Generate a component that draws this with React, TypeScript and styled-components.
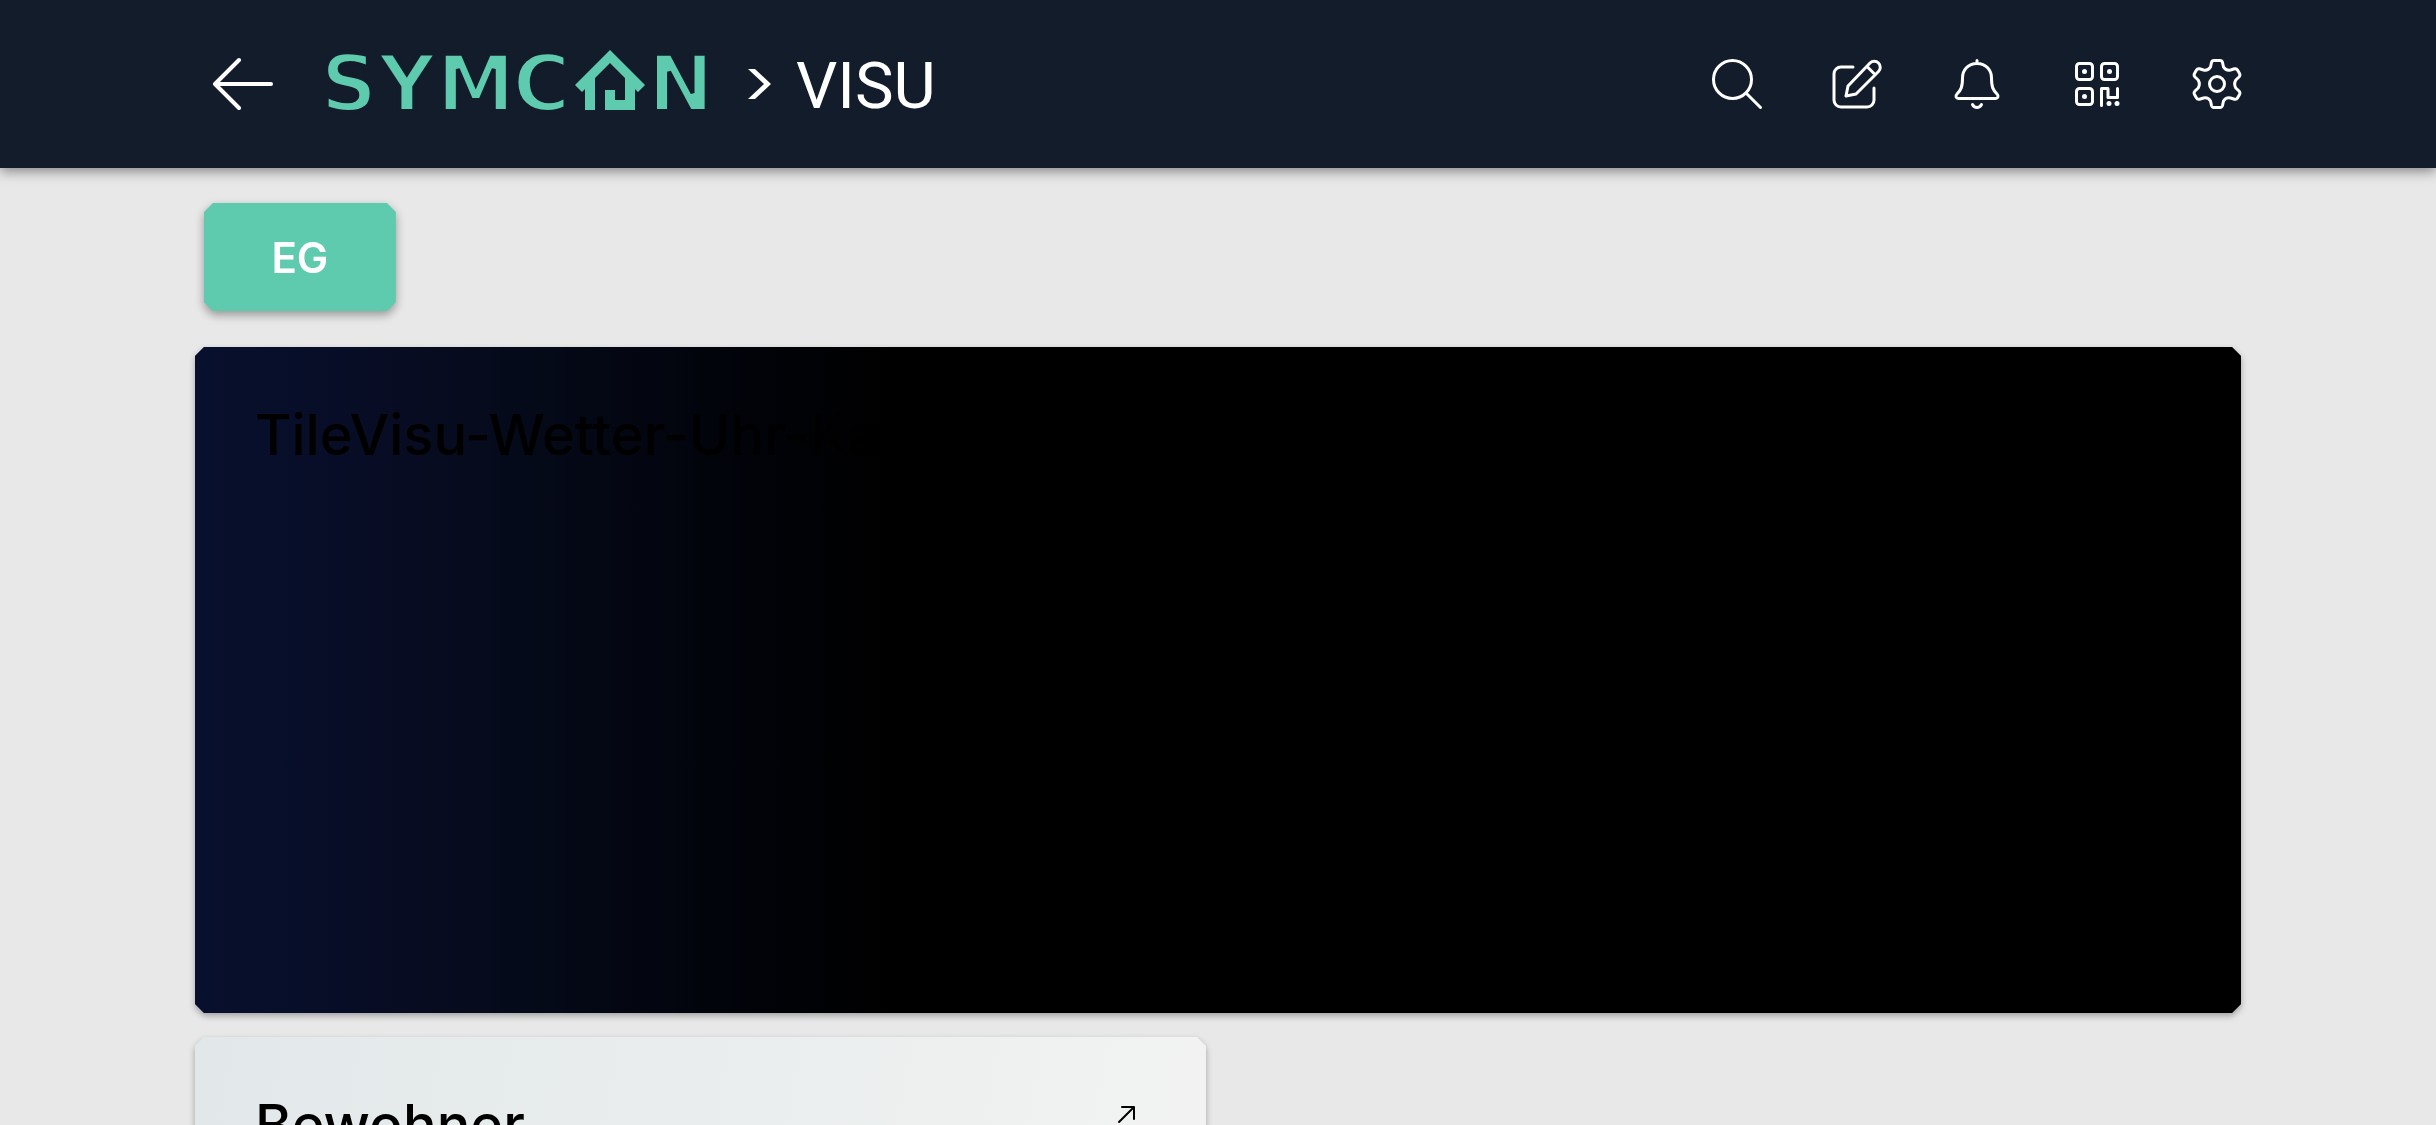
import React from "react";
import styled, { createGlobalStyle } from "styled-components";

const Global = createGlobalStyle`
  * { box-sizing: border-box; }
  html, body { margin: 0; background: #e8e8e8; }
  body { font-family: Inter, "Liberation Sans", sans-serif; color: #000; }
  button { font: inherit; color: inherit; border: 0; padding: 0; background: none; cursor: pointer; }
`;

const Page = styled.div`
  height: 100vh;
  overflow: hidden;
  display: flex;
  flex-direction: column;
`;

const Header = styled.header`
  flex: none;
  display: flex;
  align-items: center;
  justify-content: space-between;
  height: 168px;
  padding: 0 8%;
  background: #131c2a;
  box-shadow: 0 3px 12px rgba(0, 0, 0, 0.45);
`;

const Trail = styled.nav`
  display: flex;
  align-items: center;
`;

const IconButton = styled.button`
  display: grid;
  place-items: center;
  width: 96px;
  height: 96px;
  color: #fff;
`;

const Tools = styled.div`
  display: flex;
  gap: 24px;
  margin-right: -24px;
`;

const Logo = styled.div`
  display: grid;
  grid-template-columns: 52px 64px 74px 57px 80px 62px;
  justify-items: center;
  align-items: center;
  margin-left: 32px;
  font: 700 79px/80px "DejaVu Sans", sans-serif;
  color: #5ecbae;
  -webkit-text-stroke: 4px #131c2a;
`;

const Chevron = styled.svg`
  margin: 0 24px 0 36px;
`;

const Place = styled.h1`
  margin: 0;
  padding-top: 4px;
  font: 400 65px/96px Roboto, sans-serif;
  color: #fff;
`;

const Main = styled.main`
  flex: 1;
  padding: 35px 8% 0;
`;

const Tabs = styled.div`
  display: flex;
  padding-left: 9px;
  margin-bottom: 36px;
  filter: drop-shadow(0 4px 5px rgba(0, 0, 0, 0.35));
`;

const cut = `polygon(9px 0, calc(100% - 9px) 0, 100% 9px, 100% calc(100% - 9px), calc(100% - 9px) 100%, 9px 100%, 0 calc(100% - 9px), 0 9px)`;

const Tab = styled.button`
  && {
    width: 192px;
    height: 108px;
    clip-path: ${cut};
    background: #5ecbae;
    color: #fff;
    font-size: 42px;
    font-weight: 600;
  }
`;

const Shadow = styled.div<{ $half?: boolean }>`
  width: ${(p) => (p.$half ? "calc(50% - 12px)" : "100%")};
  margin-bottom: 24px;
  filter: drop-shadow(0 3px 3px rgba(0, 0, 0, 0.3));
`;

const Tile = styled.section<{ $bg: string; $height: number }>`
  display: flex;
  justify-content: space-between;
  min-height: ${(p) => p.$height}px;
  padding: 48px 60px;
  clip-path: ${cut};
  background: ${(p) => p.$bg};
`;

const Title = styled.h2`
  margin: 0;
  font-size: 56px;
  line-height: 81px;
  font-weight: 500;
`;

const OpenButton = styled.button`
  display: grid;
  place-items: center;
  align-self: flex-start;
  margin-top: 12px;
  width: 36px;
  height: 36px;
`;

const night =
  "linear-gradient(90deg, #07102d 0, #080d26 8%, #050a1a 16%, #02040c 25%, #000 34%)";
const frost = "linear-gradient(100deg, #e2e8ea 0, #e9eded 45%, #f3f3f3 100%)";

const stroke = {
  fill: "none",
  stroke: "currentColor",
  strokeLinecap: "round" as const,
  strokeLinejoin: "round" as const,
  "aria-hidden": true,
};

export default function App() {
  return (
    <Page>
      <Global />
      <Header>
        <Trail aria-label="Navigation">
          <IconButton aria-label="Zurück">
            <svg width="96" height="96" viewBox="0 0 96 96" strokeWidth="4" {...stroke}>
              <path d="M76 48H20M44 24 20 48l24 24" />
            </svg>
          </IconButton>
          <Logo>
            <span>S</span>
            <span>Y</span>
            <span>M</span>
            <span>C</span>
            <svg width="70" height="68" viewBox="0 0 70 68" fill="#5ecbae" stroke="none" aria-hidden="true">
              <path d="M35 0 70 35l-7 7-3-3v21H30V40h10v10h10V28L35 13 20 28v32H10V39l-3 3-7-7z" />
            </svg>
            <span>N</span>
          </Logo>
          <Chevron width="24" height="32" viewBox="0 0 24 32" fill="#fff" aria-hidden="true">
            <path d="M0 1h7l16 15L7 31H0l16-15z" />
          </Chevron>
          <Place>VISU</Place>
        </Trail>
        <Tools>
          <IconButton aria-label="Suche">
            <svg width="50" height="50" viewBox="0 0 50 50" strokeWidth="3" {...stroke}>
              <circle cx="20.5" cy="20.5" r="19" />
              <path d="m34.5 34.5 14 14" />
            </svg>
          </IconButton>
          <IconButton aria-label="Bearbeiten">
            <svg width="50" height="50" viewBox="0 0 50 50" strokeWidth="3" {...stroke}>
              <path d="M21 8H9a7 7 0 0 0-7 7v26a7 7 0 0 0 7 7h26a7 7 0 0 0 7-7V29" />
              <path d="M14 37l2-10L38 4a5.800 5.800 0 0 1 8.500 8.500L24 35zM35 7.500l8 8" />
            </svg>
          </IconButton>
          <IconButton aria-label="Mitteilungen">
            <svg width="50" height="50" viewBox="0 0 50 50" strokeWidth="3" {...stroke}>
              <path d="M25 1.500V4M25 4.500C16 4.500 10.500 11 10.500 19c0 9-1.500 12-5.500 16-2 2-1 4.500 1.500 4.500h37c2.500 0 3.500-2.500 1.500-4.500-4-4-5.500-7-5.500-16C39.500 11 34 4.500 25 4.500zM20.500 45.500c2 4 7 4 9 0" />
            </svg>
          </IconButton>
          <IconButton aria-label="QR-Code">
            <svg width="50" height="50" viewBox="0 0 50 50" strokeWidth="3" {...stroke}>
              <rect x="4.500" y="4.500" width="16" height="16" rx="3" />
              <rect x="29.500" y="4.500" width="16" height="16" rx="3" />
              <rect x="4.500" y="29.500" width="16" height="16" rx="3" />
              <path d="M29.500 46.500v-17H36v9h9.500v-9" />
              <g fill="currentColor" stroke="none">
                <circle cx="12.500" cy="12.500" r="2.500" />
                <circle cx="37.500" cy="12.500" r="2.500" />
                <circle cx="12.500" cy="37.500" r="2.500" />
                <circle cx="37" cy="44.500" r="2.500" />
                <circle cx="45" cy="44.500" r="2.500" />
              </g>
            </svg>
          </IconButton>
          <IconButton aria-label="Einstellungen">
            <svg width="50" height="50" viewBox="0 0 50 50" strokeWidth="3" {...stroke}>
              <circle cx="25" cy="25" r="7.500" />
              <path d="M22 1.500h6q2 0 2.500 2l1 4.500q2.500 4 7 3l4-1.200q2-.5 3 1.200l2 3.500q1 2-.5 3.500l-3.200 3q-2.300 4 0 8l3.200 3q1.500 1.500.5 3.500l-2 3.500q-1 1.700-3 1.200l-4-1.200q-4.500-1-7 3l-1 4.500q-.5 2-2.500 2h-6q-2 0-2.500-2l-1-4.500q-2.500-4-7-3l-4 1.200q-2 .5-3-1.200l-2-3.500q-1-2 .5-3.500l3.200-3q2.300-4 0-8l-3.200-3q-1.500-1.500-.5-3.500l2-3.500q1-1.700 3-1.200l4 1.200q4.500 1 7-3l1-4.500q.5-2 2.500-2z" />
            </svg>
          </IconButton>
        </Tools>
      </Header>
      <Main>
        <Tabs>
          <Tab>EG</Tab>
        </Tabs>
        <Shadow>
          <Tile $bg={night} $height={666}>
            <Title>TileVisu-Wetter-Uhr-Kachel</Title>
          </Tile>
        </Shadow>
        <Shadow $half>
          <Tile $bg={frost} $height={300}>
            <Title>Bewohner</Title>
            <OpenButton aria-label="Öffnen">
              <svg width="36" height="36" viewBox="0 0 36 36" strokeWidth="2" {...stroke}>
                <path d="M9 25 24 10M12 10h12v12" />
              </svg>
            </OpenButton>
          </Tile>
        </Shadow>
      </Main>
    </Page>
  );
}
